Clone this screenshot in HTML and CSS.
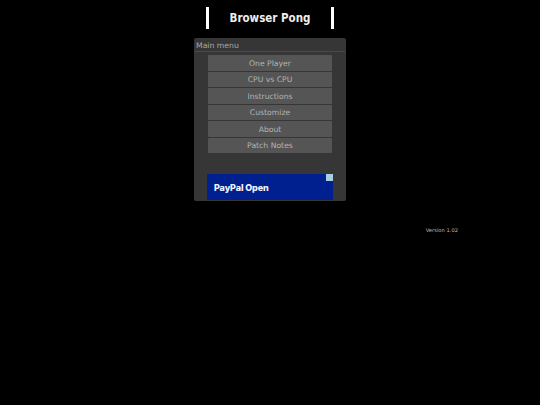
FILE: index.html
```html
<!DOCTYPE html>
<html lang="en">
<head>
    <meta charset="UTF-8">
    <meta name="viewport" content="width=device-width, initial-scale=1.0">
    <title>Browser Pong</title>
    <link rel="stylesheet" href="styles.css">
</head>
<body>
    <header class="title-bar">
        <h1>Browser Pong</h1>
    </header>

    <div class="menu-panel">
        <div class="menu-title">Main menu</div>
        <div class="menu-buttons">
            <button class="menu-button">One Player</button>
            <button class="menu-button">CPU vs CPU</button>
            <button class="menu-button">Instructions</button>
            <button class="menu-button">Customize</button>
            <button class="menu-button">About</button>
            <button class="menu-button">Patch Notes</button>
        </div>
        <div class="ad">
            <span class="ad-text">PayPal Open</span>
            <span class="ad-badge"></span>
        </div>
    </div>

    <div class="version">Version 1.02</div>
</body>
</html>
```

FILE: styles.css
```css
* {
    box-sizing: border-box;
}
body {
    margin: 0;
    background: #000;
    font-family: "DejaVu Sans", sans-serif;
    color: #bbb;
}
.title-bar {
    width: 128px;
    height: 22px;
    margin: 7px auto 0;
    border-left: 3px solid #fff;
    border-right: 3px solid #fff;
    display: flex;
    align-items: center;
    justify-content: center;
}
h1 {
    margin: 0;
    font-size: 11.5px;
    font-weight: bold;
    font-stretch: condensed;
    color: #eee;
}
.menu-panel {
    width: 152px;
    height: 163px;
    margin: 9px auto 0;
    padding: 0 1px 1px;
    background: #363636;
    border-radius: 2px;
    display: flex;
    flex-direction: column;
}
.menu-title {
    height: 14px;
    padding: 3px 1px 0;
    font-size: 7.7px;
    line-height: 10px;
    color: #aaa;
    border-bottom: 1px solid #4a4a4a;
}
.menu-buttons {
    display: flex;
    flex-direction: column;
    gap: 1px;
    width: 124px;
    margin: 3px auto 0;
}
.menu-button {
    height: 15.5px;
    padding: 1px 0 0;
    border: none;
    border-radius: 1px;
    background: #555;
    color: #b4b4b4;
    font-family: inherit;
    font-size: 7.7px;
}
.ad {
    position: relative;
    width: 126px;
    height: 26px;
    margin: auto auto 0;
    background: #00208f;
    display: flex;
    align-items: center;
    padding-left: 7px;
}
.ad-text {
    font-family: Inter, sans-serif;
    font-size: 9px;
    font-weight: 800;
    letter-spacing: -0.1px;
    color: #f0f4ff;
}
.ad-badge {
    position: absolute;
    top: 0;
    right: 0;
    width: 7px;
    height: 7px;
    background: #a6cfe0;
}
.version {
    margin-top: 25px;
    padding-right: 82px;
    text-align: right;
    font-size: 5.2px;
    line-height: 8px;
    color: #bbb;
}
```
